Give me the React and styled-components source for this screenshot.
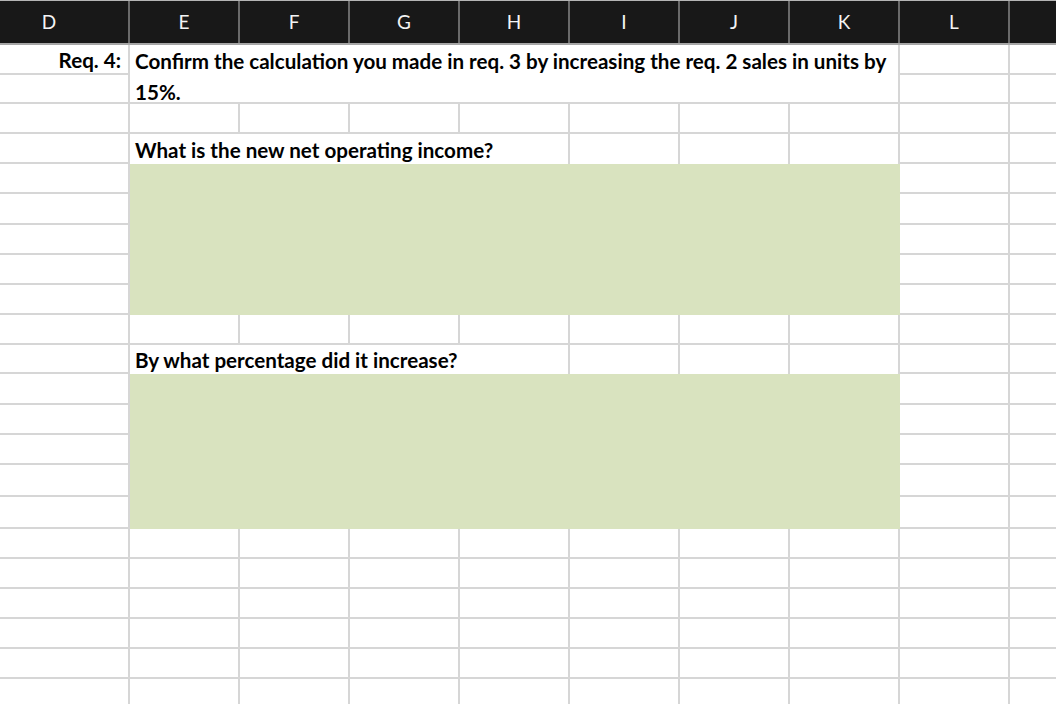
import React from 'react';
import styled, { createGlobalStyle } from 'styled-components';

const COLUMNS = ['D', 'E', 'F', 'G', 'H', 'I', 'J', 'K', 'L', ''];

// heights of the visible sheet rows, top to bottom
const ROW_HEIGHTS = [30, 29, 30, 30, 30, 31, 30, 30, 30, 30, 29, 31, 30, 30, 32, 32, 30, 30, 30, 30, 30, 30];

const ROWS = [
  { kind: 'title' },
  { kind: 'covered' },
  { kind: 'plain' },
  { kind: 'question', text: 'What is the new net operating income?' },
  { kind: 'answer', span: 5 },
  { kind: 'covered' },
  { kind: 'covered' },
  { kind: 'covered' },
  { kind: 'covered' },
  { kind: 'plain' },
  { kind: 'question', text: 'By what percentage did it increase?' },
  { kind: 'answer', span: 5 },
  { kind: 'covered' },
  { kind: 'covered' },
  { kind: 'covered' },
  { kind: 'covered' },
  { kind: 'plain' },
  { kind: 'plain' },
  { kind: 'plain' },
  { kind: 'plain' },
  { kind: 'plain' },
  { kind: 'plain' },
];

const GlobalStyle = createGlobalStyle`
  html, body {
    margin: 0;
    padding: 0;
    background: #ffffff;
  }
  body {
    font-family: Lato, "Open Sans", sans-serif;
    overflow: hidden;
  }
`;

const renderRow = (row, i) => {
  const cells = [];
  const key = (c) => `${i}-${c}`;

  cells.push(
    <Cell key={key('D')} $align="right">
      {row.kind === 'title' ? <Label>Req. 4:</Label> : null}
    </Cell>
  );

  if (row.kind === 'title') {
    cells.push(
      <Cell key={key('EK')} $cols={7} $rows={2} $block>
        <Line>Confirm the calculation you made in req. 3 by increasing the req. 2 sales in units by</Line>
        <Line>15%.</Line>
      </Cell>
    );
  } else if (row.kind === 'plain') {
    for (let c = 1; c <= 7; c++) cells.push(<Cell key={key(c)} />);
  } else if (row.kind === 'question') {
    cells.push(
      <Cell key={key('EH')} $cols={4} $noBottom>
        <Label>{row.text}</Label>
      </Cell>
    );
    for (let c = 5; c <= 7; c++) cells.push(<Cell key={key(c)} $noBottom />);
  } else if (row.kind === 'answer') {
    cells.push(<AnswerBox key={key('ans')} $rows={row.span} />);
  }

  cells.push(<Cell key={key('L')} />);
  cells.push(<Cell key={key('M')} $noRight />);
  return cells;
};

const App = () => {
  return (
    <>
      <GlobalStyle />
      <Sheet>
        <HeaderRow>
          {COLUMNS.map((col, i) => (
            <HeaderCell key={col || 'M'} $first={i === 0} $last={i === COLUMNS.length - 1}>
              {col}
            </HeaderCell>
          ))}
        </HeaderRow>
        <Grid>{ROWS.map(renderRow)}</Grid>
      </Sheet>
    </>
  );
};

export default App;



const GRID_COLUMNS = '130px repeat(8, 110px) 1fr';

const Sheet = styled.div`
  width: 1056px;
  height: 704px;
  overflow: hidden;
  background: #ffffff;
`;

const HeaderRow = styled.div`
  display: grid;
  grid-template-columns: ${GRID_COLUMNS};
  height: 45px;
  box-sizing: border-box;
  border-top: 1px solid #b4b4b4;
  border-bottom: 2px solid #a6a6a6;
  background: #181818;
`;

const HeaderCell = styled.div`
  display: flex;
  align-items: center;
  justify-content: center;
  box-sizing: border-box;
  padding-right: ${(p) => (p.$first ? '30px' : '0')};
  padding-bottom: 1px;
  border-right: ${(p) => (p.$last ? 'none' : '2px solid #6a6a6a')};
  color: #f4f4f4;
  font-size: 19px;
  font-weight: 400;
`;

const Grid = styled.div`
  display: grid;
  grid-template-columns: ${GRID_COLUMNS};
  grid-template-rows: ${ROW_HEIGHTS.map((h) => `${h}px`).join(' ')};
`;

const Cell = styled.div`
  grid-column: span ${(p) => p.$cols || 1};
  grid-row: span ${(p) => p.$rows || 1};
  box-sizing: border-box;
  border-right: ${(p) => (p.$noRight ? 'none' : '2px solid #d6d6d6')};
  border-bottom: ${(p) => (p.$noBottom ? 'none' : '2px solid #d6d6d6')};
  display: flex;
  flex-direction: ${(p) => (p.$block ? 'column' : 'row')};
  align-items: ${(p) => (p.$block ? 'flex-start' : 'center')};
  justify-content: ${(p) => (p.$align === 'right' ? 'flex-end' : 'flex-start')};
  padding: ${(p) => (p.$align === 'right' ? '0 7px 0 0' : '0 0 0 5px')};
  min-width: 0;
  white-space: nowrap;
  color: #000000;
  font-size: 20.6px;
  font-weight: 700;
`;

const Label = styled.span`
  display: block;
  line-height: 30px;
  padding-top: 1px;
`;

const Line = styled.span`
  display: block;
  height: 30px;
  line-height: 30px;
  padding-top: 1px;
`;

const AnswerBox = styled.div`
  grid-column: span 7;
  grid-row: span ${(p) => p.$rows};
  background: #d9e3bf;
`;
